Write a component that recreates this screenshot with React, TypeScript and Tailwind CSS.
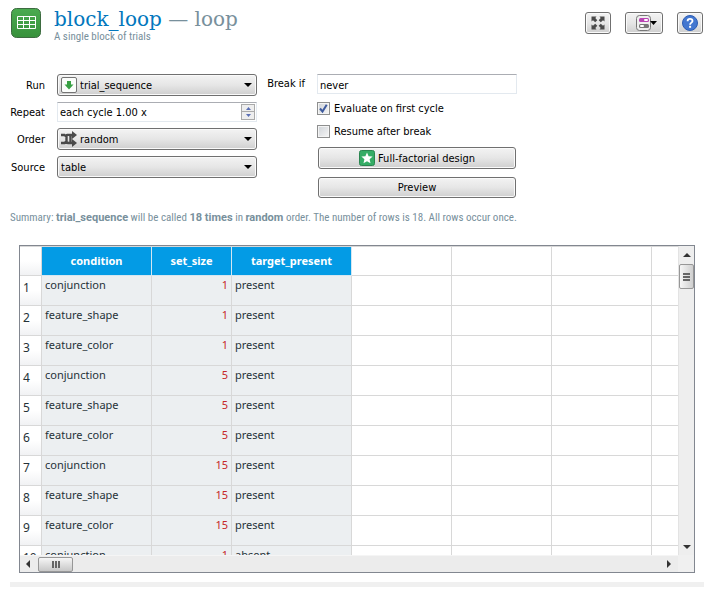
import type { ReactNode } from "react";

const ui = "font-['DejaVu_Sans_Condensed','DejaVu_Sans',sans-serif]";
const narrow = "font-['Roboto_Condensed','Liberation_Sans_Narrow',sans-serif]";
const wide = "font-['Roboto',sans-serif]";
const raised =
  "rounded-[3px] border border-[#707070] bg-linear-to-b from-[#f3f3f3] via-[#e6e6e6] to-[#cfcfcf] shadow-[inset_0_0_0_1px_#fafafa]";

const rows: [string, number, string][] = [
  ["conjunction", 1, "present"],
  ["feature_shape", 1, "present"],
  ["feature_color", 1, "present"],
  ["conjunction", 5, "present"],
  ["feature_shape", 5, "present"],
  ["feature_color", 5, "present"],
  ["conjunction", 15, "present"],
  ["feature_shape", 15, "present"],
  ["feature_color", 15, "present"],
  ["conjunction", 1, "absent"],
];

function Arrow({ d, className = "" }: { d: string; className?: string }) {
  return (
    <svg viewBox="0 0 8 8" width="8" height="8" className={className} aria-hidden="true">
      <path d={d} fill="currentColor" />
    </svg>
  );
}

const UP = "M4 2 8 6H0Z";
const DOWN = "M0 2H8L4 6Z";
const LEFT = "M6 0V8L2 4Z";
const RIGHT = "M2 0V8L6 4Z";

function LoopIcon() {
  return (
    <svg viewBox="0 0 30 30" width="30" height="30" aria-hidden="true">
      <defs>
        <linearGradient id="loop" x1="0" y1="0" x2="0" y2="1">
          <stop offset="0" stopColor="#4bab50" />
          <stop offset="1" stopColor="#37913b" />
        </linearGradient>
      </defs>
      <rect x="0.5" y="0.5" width="29" height="29" rx="5" fill="url(#loop)" stroke="#3d6b40" />
      <path d="M6.5 8.5h18v12h-18zM6.5 12.5h18M6.5 16.5h18M12.5 8.5v12M18.5 8.5v12" fill="none" stroke="#fff" />
    </svg>
  );
}

function ExpandIcon() {
  return (
    <svg viewBox="0 0 14 14" width="14" height="14" aria-hidden="true">
      <path d="M0.500 0.500h5L4.300 2 6.300 4.200 4.200 6.300 2 4.300 0.500 5.500zM13.500 0.500v5L12 4.300 9.800 6.300 7.700 4.200 9.700 2 8.500 0.500zM0.500 13.500v-5L2 9.700 4.200 7.700 6.300 9.800 4.300 12l1.200 1.500zM13.500 13.500h-5L9.700 12 7.700 9.800 9.800 7.700 12 9.700l1.500-1.200z" fill="#4a4a4a" />
    </svg>
  );
}

function SwitchIcon() {
  return (
    <svg viewBox="0 0 22 16" width="22" height="16" aria-hidden="true">
      <rect x="0.5" y="0.5" width="14" height="15" rx="3" fill="#efefef" stroke="#777" />
      <rect x="3" y="3" width="10" height="4" rx="1.500" fill="#b944b4" />
      <rect x="8" y="4" width="4" height="2" rx="1" fill="#fff" />
      <rect x="3" y="9" width="10" height="4" rx="1.500" fill="#777" />
      <rect x="4" y="10" width="4" height="2" rx="1" fill="#fff" />
      <path d="M14 6h7l-3.5 4z" fill="#000" />
    </svg>
  );
}

function HelpIcon() {
  return (
    <svg viewBox="0 0 16 16" width="16" height="16" aria-hidden="true">
      <circle cx="8" cy="8" r="7.5" fill="#4377d0" stroke="#2c5cb4" />
      <path d="M5.6 6.2C5.6 4.7 6.6 3.9 8 3.9s2.5.8 2.5 2.1C10.500 7.600 8.100 7.700 8.100 9.700" fill="none" stroke="#fff" strokeWidth="1.800" />
      <rect x="7.1" y="10.800" width="2" height="2" fill="#fff" />
    </svg>
  );
}

function SequenceIcon() {
  return (
    <svg viewBox="0 0 16 16" width="16" height="16" aria-hidden="true">
      <rect x="0.5" y="0.5" width="15" height="15" rx="1.5" fill="#fbfdfb" stroke="#747474" />
      <path d="M6 4h4v3.500h2.500L8 12.500 3.500 7.500H6z" fill="#37a043" />
    </svg>
  );
}

function ShuffleIcon() {
  return (
    <svg viewBox="0 0 16 16" width="16" height="16" aria-hidden="true">
      <path d="M0 4h3.500L5.500 5.500V10.500L7 12h5M0 12h3.500L5.500 10.500M12 4H8.500L9.500 5V11" fill="none" stroke="#4a4a4a" strokeWidth="2.400" />
      <path d="M5 4h4" stroke="#4a4a4a" strokeWidth="2" />
      <path d="M11 0l5 4-5 4zM11 8l5 4-5 4z" fill="#4a4a4a" />
    </svg>
  );
}

function StarIcon() {
  return (
    <svg viewBox="0 0 16 16" width="16" height="16" aria-hidden="true">
      <rect x="0.5" y="0.5" width="15" height="15" rx="2" fill="#35ac65" stroke="#2b8550" />
      <path d="M8 2.500l1.600 3.700 4 .4-3 2.700.9 4L8 11.200l-3.500 2.100.9-4-3-2.700 4-.4z" fill="#fff" />
    </svg>
  );
}

function Combo({ id, value, icon }: { id: string; value: string; icon?: ReactNode }) {
  return (
    <div className="relative h-[22px]">
      <select id={id} className={`h-full w-full appearance-none pt-px text-black ${raised} ${icon ? "pl-[22px]" : "pl-[3px]"}`}>
        <option>{value}</option>
      </select>
      {icon && <span className="pointer-events-none absolute inset-y-0 left-1 flex items-center">{icon}</span>}
      <span className="pointer-events-none absolute inset-y-0 right-[5px] flex items-center">
        <Arrow d={DOWN} />
      </span>
    </div>
  );
}

function Check({ label, checked }: { label: string; checked?: boolean }) {
  return (
    <label className="flex h-[13px] items-center gap-1">
      <span className="grid size-[13px] shrink-0">
        <input
          type="checkbox"
          defaultChecked={checked}
          className="peer col-start-1 row-start-1 size-[13px] appearance-none border border-[#8e8f8f] bg-linear-to-br from-[#cfd3d8] to-[#f6f6f6] shadow-[inset_0_0_0_1px_#f4f4f4]"
        />
        <svg viewBox="0 0 13 13" className="pointer-events-none invisible col-start-1 row-start-1 size-[13px] peer-checked:visible" aria-hidden="true">
          <path d="M3 6.500 5.500 9.500 9.700 2.800" fill="none" stroke="#3e5a9e" strokeWidth="2" />
        </svg>
      </span>
      <span className="pt-px">{label}</span>
    </label>
  );
}

export default function App() {
  return (
    <main className={`flex flex-col bg-white pb-[9px] text-[11px] leading-[14px] text-black ${ui}`}>
      <header className="flex items-start pt-2 pr-[14px] pl-[11px]">
        <LoopIcon />
        <div className="ml-[13px] flex-1">
          <h1 className="font-['Roboto_Slab','DejaVu_Serif',serif] text-[20px] leading-[22px] text-[#0277bd]">
            block_loop <span className="text-[#78909c]">— loop</span>
          </h1>
          <p className={`text-[11px] leading-[14px] text-[#78909c] ${narrow}`}>A single block of trials</p>
        </div>
        <div className="flex gap-[14px] pt-1">
          <button aria-label="Expand" className={`grid h-[22px] w-[26px] place-items-center ${raised}`}><ExpandIcon /></button>
          <button aria-label="View" className={`grid h-[22px] w-[38px] place-items-center pl-[6px] ${raised}`}><SwitchIcon /></button>
          <button aria-label="Help" className={`grid h-[22px] w-[26px] place-items-center ${raised}`}><HelpIcon /></button>
        </div>
      </header>

      <form className="mt-[30px] flex items-start">
        <div className="grid w-[257px] grid-cols-[45px_1fr] items-center gap-x-3 gap-y-[6px]">
          <label htmlFor="run" className="pt-px text-right">Run</label>
          <Combo id="run" value="trial_sequence" icon={<SequenceIcon />} />
          <label htmlFor="repeat" className="pt-px text-right">Repeat</label>
          <div className="flex h-5 border border-[#e3e9ef] border-t-[#abadb3] p-px">
            <input id="repeat" defaultValue="each cycle 1.00 x" className="min-w-0 flex-1 pt-[2px] pl-px" />
            <span className="flex w-[14px] flex-col text-[#5b6fb5]">
              <button type="button" aria-label="Increase" className="grid h-2 place-items-center border border-[#aaa] bg-[#eee]">
                <svg width="5" height="3" aria-hidden="true"><path d="M0 3 2.500 0 5 3z" fill="currentColor" /></svg>
              </button>
              <button type="button" aria-label="Decrease" className="grid h-2 place-items-center border border-t-0 border-[#aaa] bg-[#eee]">
                <svg width="5" height="3" aria-hidden="true"><path d="M0 0H5L2.500 3z" fill="currentColor" /></svg>
              </button>
            </span>
          </div>
          <label htmlFor="order" className="pt-px text-right">Order</label>
          <Combo id="order" value="random" icon={<ShuffleIcon />} />
          <label htmlFor="source" className="pt-px text-right">Source</label>
          <Combo id="source" value="table" />
        </div>
        <div className="grid w-[260px] grid-cols-[48px_1fr] gap-x-3">
          <label htmlFor="break" className="pt-[3px] text-right whitespace-nowrap">Break if</label>
          <input id="break" defaultValue="never" className="h-5 w-full border border-[#e3e9ef] border-t-[#abadb3] pt-[2px] pl-[2px]" />
          <div className="col-start-2 flex flex-col pt-2">
            <div className="flex flex-col gap-[10px]">
              <Check label="Evaluate on first cycle" checked />
              <Check label="Resume after break" />
            </div>
            <button type="button" className={`mx-px mt-[9px] flex h-[22px] items-center justify-center gap-[3px] ${raised}`}>
              <StarIcon />
              <span className="pt-px">Full-factorial design</span>
            </button>
            <button type="button" className={`mx-px mt-2 h-[21px] pt-px ${raised}`}>Preview</button>
          </div>
        </div>
      </form>

      <p className={`mt-[13px] ml-[10px] text-[11px] leading-[14px] text-[#78909c] ${narrow}`}>
        Summary: <b className={wide}>trial_sequence</b> will be called <b className={wide}>18 times</b> in <b className={wide}>random</b> order. The number of rows is 18. All rows occur once.
      </p>

      <section className="mt-5 mr-[22px] ml-[19px] grid grid-cols-[1fr_16px] border border-[#828790]">
        <div className="h-[309px] overflow-hidden border-t border-[#d8d8d8]">
          <table className="w-full table-fixed border-separate border-spacing-0 font-['Noto_Sans',sans-serif] text-[11px] leading-[16px] text-[#263238]">
            <colgroup>
              <col className="w-[22px]" />
              <col className="w-[110px]" />
              <col className="w-[80px]" />
              <col className="w-[120px]" />
              <col className="w-[100px]" />
              <col className="w-[100px]" />
              <col className="w-[100px]" />
              <col />
            </colgroup>
            <thead>
              <tr className="h-[29px]">
                <td className="border-r border-b border-[#d8d8d8] bg-linear-to-b from-white from-50% to-[#f1f2f4]" />
                {["condition", "set_size", "target_present"].map((h) => (
                  <th key={h} className="border-r border-b border-[#d4e6f1] bg-[#039be5] p-0 text-white">{h}</th>
                ))}
                {[0, 1, 2].map((i) => <td key={i} className="border-r border-b border-[#d8d8d8]" />)}
                <td className="border-b border-[#d8d8d8]" />
              </tr>
            </thead>
            <tbody>
              {rows.map(([condition, size, target], i) => (
                <tr key={i} className="h-[30px]">
                  <th className="border-r border-b border-[#d8d8d8] bg-linear-to-b from-white from-50% to-[#f1f2f4] p-0 pt-1 pl-[3px] text-left align-top text-[12px] font-normal">{i + 1}</th>
                  <td className="border-r border-b border-[#d8d8d8] bg-[#eceff1] p-0 pt-px pl-[3px] align-top">{condition}</td>
                  <td className="border-r border-b border-[#d8d8d8] bg-[#eceff1] p-0 pt-px pr-[3px] text-right align-top text-[#c62828]">{size}</td>
                  <td className="border-r border-b border-[#d8d8d8] bg-[#eceff1] p-0 pt-px pl-[3px] align-top">{target}</td>
                  {[0, 1, 2].map((c) => <td key={c} className="border-r border-b border-[#d8d8d8]" />)}
                  <td className="border-b border-[#d8d8d8]" />
                </tr>
              ))}
            </tbody>
          </table>
        </div>
        <div className="flex flex-col items-center border-l border-[#e3e3e3] bg-[#eeeeee] text-[#333]">
          <Arrow d={UP} className="mt-[5px]" />
          <div className="mt-[5px] flex h-[25px] w-[15px] flex-col items-center justify-center gap-px rounded-[2px] border border-[#979797] bg-linear-to-r from-[#f6f6f6] to-[#cfcfcf]">
            <i className="h-[2px] w-[7px] bg-[#666]" />
            <i className="h-[2px] w-[7px] bg-[#666]" />
            <i className="h-[2px] w-[7px] bg-[#666]" />
          </div>
          <Arrow d={DOWN} className="mt-auto mb-[4px]" />
        </div>
        <div className="flex h-[17px] items-center border-t border-[#f5f5f5] bg-[#ececec] text-[#333]">
          <Arrow d={LEFT} className="ml-1" />
          <div className="ml-[6px] flex h-[15px] w-[35px] items-center justify-center gap-px rounded-[2px] border border-[#979797] bg-linear-to-b from-[#f6f6f6] to-[#c8c8c8]">
            <i className="h-[7px] w-[2px] bg-[#666]" />
            <i className="h-[7px] w-[2px] bg-[#666]" />
            <i className="h-[7px] w-[2px] bg-[#666]" />
          </div>
          <Arrow d={RIGHT} className="mr-[5px] ml-auto" />
        </div>
        <div className="bg-[#f0f0f0]" />
      </section>
      <hr className="mt-[9px] mr-[13px] ml-[10px] h-[5px] border-0 bg-[#f0f0f0]" />
    </main>
  );
}
